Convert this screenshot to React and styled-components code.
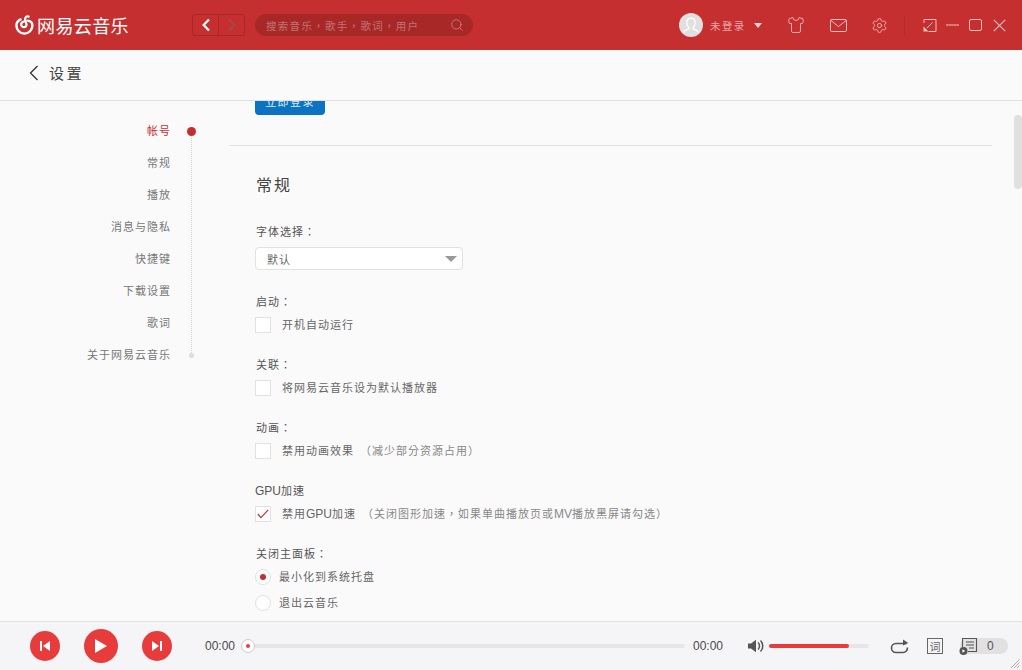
import React from "react";
import styled, { createGlobalStyle } from "styled-components";
import { Search, Settings, Shirt } from "lucide-react";

const cjk = `"Noto Sans CJK SC", "Liberation Sans", sans-serif`;
const cjkCentered = `"Noto Sans CJK TC", "Liberation Sans", sans-serif`;
const latin = `"Liberation Sans", "Noto Sans CJK SC", sans-serif`;

const Global = createGlobalStyle`
  html, body { margin: 0; padding: 0; background: #fafafa; }
  * { box-sizing: border-box; }
`;

const Shell = styled.div`
  width: 1022px;
  height: 670px;
  display: flex;
  flex-direction: column;
  overflow: hidden;
  font-family: ${latin};
  background: #fafafa;
  color: #555;
`;

const TopBar = styled.header`
  height: 50px;
  flex: none;
  background: #c62f2f;
  display: flex;
  align-items: center;
  padding-left: 15px;
`;

const Logo = styled.div`
  width: 177px;
  display: flex;
  align-items: center;
  gap: 3px;
  color: #fff;
  font-family: ${cjk};
  font-size: 18px;
  letter-spacing: 0.4px;
  line-height: 24px;
`;

const NavGroup = styled.div`
  display: flex;
  width: 53px;
  height: 22px;
  border: 1px solid #a82828;
  border-radius: 3px;
`;

const NavButton = styled.div`
  flex: 1;
  display: flex;
  align-items: center;
  justify-content: center;
  & + & { border-left: 1px solid #a82828; }
`;

const SearchBox = styled.div`
  margin-left: 10px;
  width: 218px;
  height: 22px;
  border-radius: 11px;
  background: #a82828;
  display: flex;
  align-items: center;
  justify-content: space-between;
  padding: 0 9px 0 11px;
  color: #c27474;
  font-family: ${cjkCentered};
  font-size: 10.5px;
  letter-spacing: 1.3px;
`;

const TopRight = styled.div`
  margin-left: auto;
  display: flex;
  align-items: center;
  height: 100%;
  padding-right: 14px;
`;

const Avatar = styled.div`
  width: 24px;
  height: 24px;
  border-radius: 50%;
  background: #e0e0e0;
  overflow: hidden;
  display: flex;
`;

const UserName = styled.span`
  margin-left: 7px;
  width: 44px;
  color: #eba4aa;
  font-family: ${cjk};
  font-size: 10.5px;
  letter-spacing: 1.4px;
`;

const Caret = styled.span`
  width: 0;
  height: 0;
  border-left: 4.5px solid transparent;
  border-right: 4.5px solid transparent;
  border-top: 5px solid #f4d5d5;
  margin-right: 25px;
`;

const HeadIcon = styled.span`
  display: flex;
  width: 18px;
  justify-content: center;
  margin-right: ${(p) => p.$gap}px;
  color: #f0c0c0;
`;

const Separator = styled.span`
  width: 1px;
  height: 20px;
  background: #b52a2a;
  margin-right: 16px;
`;

const SubHeader = styled.div`
  height: 51px;
  flex: none;
  border-bottom: 1px solid #e1e1e2;
  display: flex;
  align-items: center;
  gap: 10px;
  padding: 0 0 4px 28px;
  color: #444;
  font-family: ${cjk};
  font-size: 15px;
  letter-spacing: 2.5px;
`;

const SubTitle = styled.span`
  margin-bottom: 2px;
`;

const Main = styled.main`
  flex: 1;
  min-height: 0;
  display: flex;
  overflow: hidden;
  position: relative;
`;

const Side = styled.aside`
  width: 229px;
  flex: none;
  display: flex;
  padding-top: 14px;
  align-items: flex-start;
`;

const SideList = styled.nav`
  width: 170px;
  flex: none;
`;

const SideItem = styled.div`
  height: 32px;
  line-height: 30px;
  text-align: right;
  font-family: ${cjk};
  font-size: 11px;
  letter-spacing: 1px;
  margin-right: -1px;
  color: ${(p) => (p.$active ? "#c62f2f" : "#777")};
`;

const Rail = styled.div`
  margin-left: 17px;
  margin-top: 12px;
  width: 9px;
  height: 231px;
  display: flex;
  flex-direction: column;
  align-items: center;
`;

const RailDot = styled.span`
  width: 9px;
  height: 9px;
  flex: none;
  border-radius: 50%;
  background: #c62f2f;
`;

const RailLine = styled.span`
  flex: 1;
  border-left: 1px dotted #d8d8d8;
`;

const RailEnd = styled.span`
  width: 5px;
  height: 5px;
  flex: none;
  border-radius: 50%;
  background: #dcdcdc;
`;

const Content = styled.div`
  width: 763px;
  flex: none;
  margin-top: -14px;
`;

const LoginArea = styled.div`
  padding: 0 0 30px 26px;
  border-bottom: 1px solid #e1e1e2;
`;

const LoginButton = styled.div`
  width: 70px;
  height: 28px;
  line-height: 28px;
  text-align: center;
  background: #0c73c2;
  border-radius: 4px;
  color: #dcecf8;
  font-family: ${cjk};
  font-size: 11px;
  letter-spacing: 1.4px;
`;

const Sections = styled.div`
  padding: 27px 0 0 26px;
`;

const Heading = styled.h2`
  margin: 0 0 26px 1px;
  height: 24px;
  line-height: 22px;
  font-family: ${cjk};
  font-weight: 400;
  font-size: 16px;
  letter-spacing: 2px;
  color: #444;
`;

const Group = styled.section`
  margin-bottom: 23px;
`;

const Label = styled.div`
  height: 16px;
  line-height: 16px;
  margin-bottom: 8px;
  padding-left: ${(p) => (p.$flush ? 0 : 1)}px;
  font-family: ${cjkCentered};
  font-size: 11px;
  letter-spacing: 1px;
  color: #555;
`;

const Select = styled.div`
  width: 208px;
  height: 23px;
  border: 1px solid #e1e1e2;
  border-radius: 4px;
  background: #fff;
  display: flex;
  align-items: center;
  justify-content: space-between;
  padding: 0 5px 0 11px;
  font-family: ${cjk};
  font-size: 11px;
  letter-spacing: 1px;
  color: #666;
`;

const SelectArrow = styled.span`
  width: 0;
  height: 0;
  border-left: 6px solid transparent;
  border-right: 6px solid transparent;
  border-top: 6px solid #999;
`;

const Row = styled.div`
  display: flex;
  align-items: center;
  height: 16px;
  gap: ${(p) => p.$gap || 11}px;
  font-family: ${cjk};
  font-size: 11px;
  letter-spacing: 1px;
  color: #666;
  & + & { margin-top: 10px; }
`;

const RowText = styled.span`
  line-height: 14px;
  margin-bottom: 2px;
`;

const Check = styled.span`
  width: 16px;
  height: 16px;
  flex: none;
  border: 1px solid #e1e1e2;
  background: #fff;
  display: flex;
  align-items: center;
  justify-content: center;
`;

const Hint = styled.span`
  margin-left: 6px;
  color: #888;
  font-family: ${cjkCentered};
`;

const Latin = styled.span`
  font-family: ${latin};
  font-size: 12px;
  letter-spacing: 0;
`;

const Radio = styled.span`
  width: 16px;
  height: 16px;
  flex: none;
  border-radius: 50%;
  border: 1px solid #e1e1e2;
  background: #fff;
  display: flex;
  align-items: center;
  justify-content: center;
`;

const RadioDot = styled.span`
  width: 6px;
  height: 6px;
  border-radius: 50%;
  background: #c62f2f;
`;

const ScrollThumb = styled.div`
  position: absolute;
  right: 0;
  top: 14px;
  width: 8px;
  height: 74px;
  border-radius: 4px;
  background: #e0e0e0;
`;

const Player = styled.footer`
  height: 49px;
  flex: none;
  background: #f5f5f7;
  border-top: 1px solid #e1e1e2;
  display: flex;
  align-items: center;
  padding-left: 30px;
  position: relative;
`;

const RoundButton = styled.div`
  width: ${(p) => p.$size}px;
  height: ${(p) => p.$size}px;
  border-radius: 50%;
  background: #e83c3c;
  flex: none;
  display: flex;
  align-items: center;
  justify-content: center;
`;

const Transport = styled.div`
  display: flex;
  align-items: center;
  gap: 24px;
  width: 175px;
  flex: none;
`;

const Time = styled.span`
  font-size: 12px;
  width: 30px;
  flex: none;
  color: #4a4a4a;
`;

const Progress = styled.div`
  width: 444px;
  margin: 0 8px 0 6px;
  flex: none;
  height: 14px;
  display: flex;
  align-items: center;
`;

const Knob = styled.span`
  width: 14px;
  height: 14px;
  flex: none;
  border-radius: 50%;
  border: 1px solid #ccc;
  background: #fff;
  display: flex;
  align-items: center;
  justify-content: center;
`;

const KnobDot = styled.span`
  width: 4px;
  height: 4px;
  border-radius: 50%;
  background: #e83c3c;
`;

const Track = styled.span`
  flex: 1;
  height: 4px;
  background: #e6e6e8;
  border-radius: 0 2px 2px 0;
`;

const VolumeWrap = styled.div`
  margin-left: 25px;
  display: flex;
  align-items: center;
  gap: 5px;
  flex: none;
`;

const VolumeTrack = styled.div`
  width: 100px;
  height: 4px;
  border-radius: 2px;
  background: #e6e6e8;
`;

const VolumeFill = styled.div`
  height: 100%;
  border-radius: 2px;
  background: #e83c3c;
`;

const PlayerRight = styled.div`
  margin-left: 21px;
  display: flex;
  align-items: center;
  flex: none;
`;

const LyricBox = styled.span`
  width: 16px;
  height: 16px;
  margin: 0 17px 0 18px;
  border: 1px solid #666;
  display: flex;
  align-items: center;
  justify-content: center;
  font-family: ${cjk};
  font-size: 11px;
  line-height: 14px;
  color: #666;
`;

const QueuePill = styled.div`
  width: 48px;
  height: 16px;
  border-radius: 8px;
  background: #e1e1e2;
  display: flex;
  align-items: center;
  position: relative;
  font-size: 12px;
  color: #555;
  padding-left: 27px;
`;

const QueueIcon = styled.svg`
  position: absolute;
  left: -1px;
  top: -1px;
`;

const Grip = styled.svg`
  position: absolute;
  right: 2px;
  bottom: 2px;
`;

const sideItems = ["帐号", "常规", "播放", "消息与隐私", "快捷键", "下载设置", "歌词", "关于网易云音乐"];

function LogoMark() {
  return (
    <svg width="19" height="20" viewBox="0 0 19 20" fill="none" stroke="#fff" strokeLinecap="round">
      <path d="M5.6 4.4 C2.8 5.8 1.4 8.2 1.4 10.6 A8 8 0 0 0 17.4 10.6 C17.4 8.2 15.6 6 13 5.6" strokeWidth="2.4" />
      <path d="M13.6 1.6 C11.4 .8 9.8 2.6 10.2 4.4 L11.4 9 C12.4 12.8 6.4 13.2 6.2 9.8 C6.1 8 7.4 6.8 9 6.5" strokeWidth="2.2" />
    </svg>
  );
}

export default function App() {
  return (
    <Shell>
      <Global />
      <TopBar>
        <Logo>
          <LogoMark />
          <span>网易云音乐</span>
        </Logo>
        <NavGroup>
          <NavButton>
            <svg width="10" height="14" viewBox="0 0 10 14" fill="none" stroke="#fff" strokeWidth="2.2"><path d="M8 1.5 2.6 7 8 12.5" /></svg>
          </NavButton>
          <NavButton>
            <svg width="10" height="14" viewBox="0 0 10 14" fill="none" stroke="#a84848" strokeWidth="2.2"><path d="M2 1.5 7.4 7 2 12.5" /></svg>
          </NavButton>
        </NavGroup>
        <SearchBox>
          <span>搜索音乐，歌手，歌词，用户</span>
          <Search size={14} color="#d28a8a" strokeWidth={1.3} />
        </SearchBox>
        <TopRight>
          <Avatar>
            <svg width="24" height="24" viewBox="0 0 24 24" fill="none" stroke="#fff" strokeWidth="1.2">
              <path d="M12 5.2c-2.6 0-4.2 2-4.2 4.6 0 2 .9 3.6 2 4.6v1.4c-2 1-4.4 1.6-5.3 3.6M12 5.2c2.6 0 4.2 2 4.2 4.6 0 2-.9 3.6-2 4.6v1.4c2 1 4.4 1.6 5.3 3.6" />
            </svg>
          </Avatar>
          <UserName>未登录</UserName>
          <Caret />
          <HeadIcon $gap={24}>
            <Shirt size={18} strokeWidth={1.1} />
          </HeadIcon>
          <HeadIcon $gap={23}>
            <svg width="17" height="13" viewBox="0 0 17 13" fill="none" stroke="currentColor" strokeWidth="1">
              <rect x=".5" y=".5" width="16" height="12" rx="1.2" />
              <path d="M.8 1.4 8.5 7.6 16.2 1.4" />
            </svg>
          </HeadIcon>
          <HeadIcon $gap={16}>
            <Settings size={17} strokeWidth={1.2} />
          </HeadIcon>
          <Separator />
          <HeadIcon $gap={5}>
            <svg width="14" height="13" viewBox="0 0 14 13" fill="none" stroke="currentColor" strokeWidth="1">
              <path d="M1 4V.5H13V12.5H5.5M9.5 3.5 4 9" />
              <path d="M.5 7.5 5.5 12.5H.5Z" fill="currentColor" stroke="none" />
            </svg>
          </HeadIcon>
          <HeadIcon $gap={4}>
            <svg width="14" height="2" viewBox="0 0 14 2"><path d="M0 1H13" stroke="currentColor" /></svg>
          </HeadIcon>
          <HeadIcon $gap={6}>
            <svg width="13" height="12" viewBox="0 0 13 12" fill="none" stroke="currentColor"><rect x=".5" y=".5" width="12" height="11" rx="1.5" /></svg>
          </HeadIcon>
          <HeadIcon $gap={0}>
            <svg width="13" height="13" viewBox="0 0 13 13" fill="none" stroke="currentColor" strokeWidth="1.1"><path d="M.8.8 12.2 12.2M12.2.8.8 12.2" /></svg>
          </HeadIcon>
        </TopRight>
      </TopBar>

      <SubHeader>
        <svg width="11" height="16" viewBox="0 0 11 16" fill="none" stroke="#333" strokeWidth="1.3"><path d="M9.5 1 2.5 8l7 7" /></svg>
        <SubTitle>设置</SubTitle>
      </SubHeader>

      <Main>
        <Side>
          <SideList>
            {sideItems.map((t, i) => (
              <SideItem key={t} $active={i === 0}>{t}</SideItem>
            ))}
          </SideList>
          <Rail>
            <RailDot />
            <RailLine />
            <RailEnd />
          </Rail>
        </Side>
        <Content>
          <LoginArea>
            <LoginButton>立即登录</LoginButton>
          </LoginArea>
          <Sections>
            <Heading>常规</Heading>
            <Group>
              <Label>字体选择：</Label>
              <Select>
                <span>默认</span>
                <SelectArrow />
              </Select>
            </Group>
            <Group>
              <Label>启动：</Label>
              <Row><Check /><RowText>开机自动运行</RowText></Row>
            </Group>
            <Group>
              <Label>关联：</Label>
              <Row><Check /><RowText>将网易云音乐设为默认播放器</RowText></Row>
            </Group>
            <Group>
              <Label>动画：</Label>
              <Row><Check /><RowText>禁用动画效果<Hint>（减少部分资源占用）</Hint></RowText></Row>
            </Group>
            <Group>
              <Label $flush><Latin>GPU</Latin>加速</Label>
              <Row>
                <Check>
                  <svg width="12" height="10" viewBox="0 0 12 10" fill="none" stroke="#c62f2f" strokeWidth="1.2"><path d="M.8 5 4 8.6 11.2.8" /></svg>
                </Check>
                <RowText>禁用<Latin>GPU</Latin>加速<Hint>（关闭图形加速，如果单曲播放页或<Latin>MV</Latin>播放黑屏请勾选）</Hint></RowText>
              </Row>
            </Group>
            <Group>
              <Label>关闭主面板：</Label>
              <Row $gap={8}><Radio><RadioDot /></Radio><RowText>最小化到系统托盘</RowText></Row>
              <Row $gap={8}><Radio /><RowText>退出云音乐</RowText></Row>
            </Group>
          </Sections>
        </Content>
        <ScrollThumb />
      </Main>

      <Player>
        <Transport>
          <RoundButton $size={30}>
            <svg width="12" height="12" viewBox="0 0 12 12" fill="#fff"><rect x="1" y="1" width="2" height="10" /><path d="M11 1v10L4 6z" /></svg>
          </RoundButton>
          <RoundButton $size={34}>
            <svg width="14" height="16" viewBox="0 0 14 16" fill="#fff"><path d="M1 1v14l12-7z" /></svg>
          </RoundButton>
          <RoundButton $size={30}>
            <svg width="12" height="12" viewBox="0 0 12 12" fill="#fff"><path d="M1 1v10l7-5z" /><rect x="9" y="1" width="2" height="10" /></svg>
          </RoundButton>
        </Transport>
        <Time>00:00</Time>
        <Progress>
          <Knob><KnobDot /></Knob>
          <Track />
        </Progress>
        <Time>00:00</Time>
        <VolumeWrap>
          <svg width="16" height="14" viewBox="0 0 16 14" fill="#555">
            <path d="M0 4.5h3L8 .8v12.4L3 9.5H0z" />
            <path d="M10 3.5c2 1.8 2 5.2 0 7M12.5 1.5c3 3 3 8 0 11" fill="none" stroke="#555" strokeWidth="1.5" />
          </svg>
          <VolumeTrack>
            <VolumeFill style={{ width: "80%" }} />
          </VolumeTrack>
        </VolumeWrap>
        <PlayerRight>
          <svg width="19" height="15" viewBox="0 0 19 15" fill="none" stroke="#555" strokeWidth="1.6">
            <path d="M16.5 4.5H6a4.5 4.5 0 0 0 0 9h7a4.5 4.5 0 0 0 4.4-5" />
            <path d="M13 .6 18.2 4 13 6.5z" fill="#555" stroke="none" />
          </svg>
          <LyricBox>词</LyricBox>
          <QueuePill>
            <QueueIcon width="19" height="19" viewBox="0 0 19 19" fill="none" stroke="#555" strokeWidth="1.1">
              <path d="M3.5 10V1.5H17.5V14.5H9M7 5h8M7 8h8M10 11h5" />
              <circle cx="4.5" cy="14" r="4" fill="#555" stroke="none" />
              <path d="M3.4 12.2v3.6l2.8-1.8z" fill="#fff" stroke="none" />
            </QueueIcon>
            <span>0</span>
          </QueuePill>
        </PlayerRight>
        <Grip width="10" height="9" viewBox="0 0 10 9" fill="none" stroke="#999" strokeWidth="0.8">
          <path d="M1 9 9.5.5M4 9l5.5-5.5M7 9l2.5-2.5" />
        </Grip>
      </Player>
    </Shell>
  );
}
